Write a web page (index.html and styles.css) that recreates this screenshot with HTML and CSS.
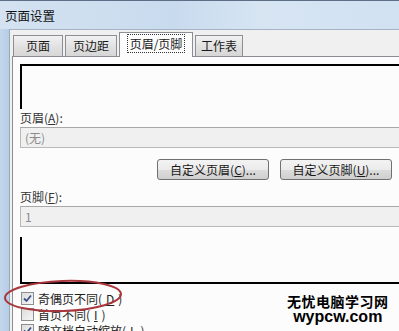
FILE: index.html
```html
<!DOCTYPE html>
<html>
<head>
    <title>页面设置</title>
    <meta charset="UTF-8">
    <link rel="stylesheet" href="styles.css">
</head>
<body>
    <div class="window">
        <div class="titlebar">页面设置</div>
        <div class="frame">
            <div class="side"></div>
            <div class="dialog">
                <div class="tabs">
                    <div class="tab tab-page">页面</div>
                    <div class="tab tab-margin">页边距</div>
                    <div class="tab tab-active"><span class="focus">页眉/页脚</span></div>
                    <div class="tab tab-sheet">工作表</div>
                </div>
                <div class="panel">
                    <div class="preview preview-top"></div>

                    <div class="label">页眉(<u>A</u>):</div>
                    <div class="field">(无)</div>

                    <div class="buttons">
                        <button class="btn">自定义页眉(<u>C</u>)...</button>
                        <button class="btn">自定义页脚(<u>U</u>)...</button>
                    </div>

                    <div class="label label-footer">页脚(<u>F</u>):</div>
                    <div class="field">1</div>

                    <div class="preview preview-bottom"></div>

                    <div class="checks">
                        <div class="check">
                            <span class="box">
                                <svg viewBox="0 0 9 9" width="9" height="9"><path d="M1 4.5 L3.5 7 L8 1.5" fill="none" stroke="#3b4f86" stroke-width="1.8"/></svg>
                            </span>
                            奇偶页不同(<u>D</u>)
                        </div>
                        <div class="check">
                            <span class="box"></span>
                            首页不同(<u>I</u>)
                        </div>
                        <div class="check">
                            <span class="box">
                                <svg viewBox="0 0 9 9" width="9" height="9"><path d="M1 4.5 L3.5 7 L8 1.5" fill="none" stroke="#3b4f86" stroke-width="1.8"/></svg>
                            </span>
                            随文档自动缩放(<u>L</u>)
                        </div>
                    </div>
                </div>
            </div>
        </div>

        <svg class="circle" width="130" height="44" viewBox="0 0 130 44">
            <ellipse cx="63" cy="21" rx="58" ry="15" fill="none" stroke="#a8363c" stroke-width="2" transform="rotate(-2 63 21)"/>
        </svg>

        <div class="watermark">
            <div class="wm-cn">无忧电脑学习网</div>
            <div class="wm-en">wypcw.com</div>
        </div>
    </div>
</body>
</html>
```

FILE: styles.css
```css
html, body {
    margin: 0;
    padding: 0;
    overflow: hidden;
}
body {
    width: 399px;
    height: 331px;
    font-family: "Noto Sans CJK SC", "DejaVu Sans", sans-serif;
    font-size: 12px;
    color: #1e1e1e;
}
.window {
    position: relative;
    width: 440px;
    height: 331px;
    background: #bfd4eb;
    overflow: hidden;
}
.titlebar {
    height: 28px;
    line-height: 30px;
    padding-left: 5px;
    font-size: 12.5px;
    color: #111;
    border-top: 1px solid #5d6f86;
    background: linear-gradient(to right, #d4e2f1 0%, #c8dbee 40%, #d7e5f3 60%, #cfe0f2 100%);
}
.frame {
    display: flex;
    height: 302px;
}
.side {
    width: 9px;
    background: linear-gradient(to right, #c3d7ec, #b6cde6);
}
.dialog {
    flex: 1;
    background: #f0f0f0;
    border-left: 1px solid #9aa9ba;
    border-top: 1px solid #a5b4c5;
    padding-left: 2px;
}
.tabs {
    display: flex;
    align-items: flex-end;
    gap: 2px;
    height: 26px;
    padding-left: 1px;
    position: relative;
    z-index: 1;
}
.tab {
    height: 20px;
    line-height: 20px;
    text-align: center;
    border: 1px solid #8c8e94;
    border-bottom: none;
    background: linear-gradient(#f2f2f2, #e2e2e2 50%, #d6d6d6);
    color: #1a1a1a;
}
.tab-page { width: 48px; }
.tab-margin { width: 50px; }
.tab-sheet { width: 46px; }
.tab-active {
    width: 72px;
    height: 24px;
    line-height: 22px;
    background: #fcfcfc;
    margin-bottom: -1px;
}
.focus {
    border: 1px dotted #333;
    padding: 0 2px;
}
.panel {
    background: #fcfcfc;
    border-top: 1px solid #8c8e94;
    border-left: 1px solid #8c8e94;
    padding-left: 7px;
    height: 300px;
}
.preview {
    border-left: 2px solid #000;
}
.preview-top {
    margin-top: 7px;
    height: 43px;
    border-top: 2px solid #000;
}
.preview-bottom {
    margin-top: 10px;
    height: 45px;
    border-bottom: 2px solid #000;
}
.label {
    margin-top: 1px;
    line-height: 16px;
    color: #333;
}
.label-footer {
    margin-top: 9px;
}
.field {
    margin-top: 1px;
    height: 19px;
    line-height: 19px;
    padding-left: 4px;
    border: 1px solid #b9b9b9;
    border-top-color: #a8a8a8;
    background: #f0f0f0;
    color: #8c8c8c;
}
.buttons {
    display: flex;
    gap: 11px;
    margin-top: 11px;
    margin-left: 137px;
}
.btn {
    width: 112px;
    height: 21px;
    padding: 0;
    font-family: inherit;
    font-size: 12px;
    color: #1a1a1a;
    border: 1px solid #707070;
    border-radius: 3px;
    background: linear-gradient(#f3f3f3, #ebebeb 50%, #dddddd 51%, #cfcfcf);
}
.checks {
    margin-top: 6px;
}
.check {
    display: flex;
    align-items: center;
    gap: 4px;
    height: 16px;
    margin-left: 1px;
    color: #1e1e1e;
}
.box {
    width: 11px;
    height: 11px;
    border: 1px solid #8e8f8f;
    background: linear-gradient(135deg, #dcdcdc, #f6f6f6);
    display: flex;
    align-items: center;
    justify-content: center;
}
.circle {
    position: absolute;
    left: 0;
    top: 275px;
}
.watermark {
    position: absolute;
    left: 287px;
    top: 294px;
    text-align: center;
    font-weight: bold;
    color: #000;
}
.wm-cn {
    font-size: 14px;
    line-height: 15px;
    letter-spacing: 0.5px;
}
.wm-en {
    font-family: "Liberation Sans", Arial, sans-serif;
    font-size: 16px;
    line-height: 13px;
    padding-top: 1px;
}
```
